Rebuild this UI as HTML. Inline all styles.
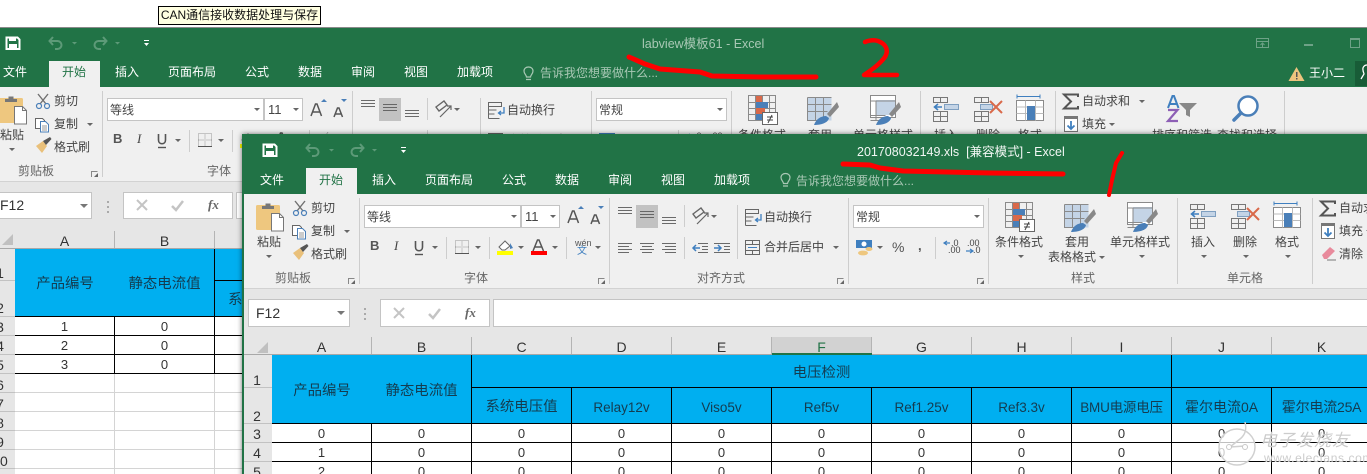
<!DOCTYPE html>
<html lang="zh"><head><meta charset="utf-8"><title>Excel</title>
<style>
html,body{margin:0;padding:0;background:#fff;width:1367px;height:474px;overflow:hidden}
body{font:12px/14px "Liberation Sans","Noto Sans CJK SC",sans-serif;color:#444}
#w{position:relative;width:1367px;height:474px;overflow:hidden}
.a{position:absolute}
b{position:absolute;font-weight:400;white-space:nowrap;line-height:14px}
svg{position:absolute;left:0;top:0;overflow:visible}
.tab b{color:#fff}
.box{position:absolute;background:#fff;border:1px solid #c4c4c4;box-sizing:border-box}
table{position:absolute;table-layout:fixed;border-collapse:separate;border-spacing:0;font-size:13px;color:#333;text-align:center}
td{padding:1px 0 0;box-sizing:border-box;border-right:1px solid #000;border-bottom:1px solid #000;overflow:hidden;white-space:nowrap;line-height:15px;background:#fff}
.h td{background:#00aff0;font-size:14.4px;color:#143c50;padding-top:4px}
td.nr{border-right:0}
.lg td{border-color:#d4d4d4}
.ch{position:absolute;background:#e6e6e6;font-size:14px;text-align:center;color:#333;border-right:1px solid #b4b4b4;box-sizing:border-box;line-height:21px;height:18px;overflow:hidden}
.n{position:absolute;width:28px;text-align:center;font-size:14px;color:#333}
.l{position:absolute;height:1px;background:#c2c2c2}
</style></head><body>
<div id="w">

<svg width="0" height="0" style="position:absolute">
<defs>
<g id="ri">
  <!-- clipboard -->
  <rect x="256" y="205" width="24" height="25" rx="1.5" fill="#eec77f"/>
  <path d="M262 209v-3h3.500v-2.500h5v2.500h3.500v3z" fill="#777"/>
  <path d="M271.500 213.500h8l4 4v13.500h-12z" fill="#fff" stroke="#777"/>
  <path d="M279.500 213.500v4h4" fill="none" stroke="#777"/>
  <!-- scissors -->
  <path d="M295 201l8 10M305 201l-8 10" stroke="#707070" stroke-width="1.400" fill="none"/>
  <circle cx="296" cy="213" r="2.500" fill="none" stroke="#4a7fb8" stroke-width="1.200"/>
  <circle cx="304" cy="213" r="2.500" fill="none" stroke="#4a7fb8" stroke-width="1.200"/>
  <!-- copy -->
  <path d="M292.500 225.500h7l2 2v8h-9z" fill="#fff" stroke="#666"/>
  <path d="M297.500 228.500h5l3 3v7.500h-8z" fill="#fff" stroke="#4a7fb8"/>
  <path d="M299 233h5M299 235h5M299 237h5" stroke="#777" stroke-width=".8"/>
  <!-- brush -->
  <path d="M293 253l7-5 4 5-5 7z" fill="#e9c07a"/>
  <path d="M300 248l7-4 1.500 2-5.500 6z" fill="#555"/>
  <!-- font size -->
  <path d="M568 223l4.500-12h1.500l4.500 12M570 219h7" stroke="#555" stroke-width="1.500" fill="none"/>
  <path d="M578 209l3-3 3 3z" fill="#4a7fb8"/>
  <path d="M591 224l3.500-9h1.500l3.500 9M592.500 221h6" stroke="#555" stroke-width="1.500" fill="none"/>
  <path d="M598 206h6l-3 3z" fill="#4a7fb8"/>
  <!-- border -->
  <path d="M455.500 240.500h13v13h-13zM462 240.500v13M455.500 247h13" fill="none" stroke="#999" stroke-dasharray="1 1"/>
  <path d="M455 253.500h14" stroke="#555"/>
  <!-- fill colour -->
  <path d="M499 247l6-6 5 5-5 4h-3z" fill="#fff" stroke="#666"/>
  <path d="M510 243l3 5-3 1z" fill="#4a7fb8"/>
  <rect x="497" y="251" width="16" height="4" fill="#ff0"/>
  <path d="M533 251l4.500-11h1.500l4.500 11M535 247h7" stroke="#555" stroke-width="1.500" fill="none"/>
  <rect x="531" y="251" width="16" height="4" fill="#f00"/>
  <!-- align -->
  <g stroke="#6a6a6a" fill="none">
  <path d="M618 207.500h14M618 210.500h14M618 213.500h14"/>
  <path d="M662 217.500h14M662 220.500h14M662 223.500h14"/>
  <path d="M618 243.500h14M618 246.500h11M618 249.500h14M618 252.500h11"/>
  <path d="M640 243.500h14M642 246.500h10M640 249.500h14M642 252.500h10"/>
  <path d="M662 243.500h14M665 246.500h11M662 249.500h14M665 252.500h11"/>
  <path d="M698 243.500h10M702 246.500h6M702 249.500h6M698 252.500h10"/>
  <path d="M714 243.500h16M724 246.500h6M724 249.500h6M714 252.500h16"/>
  </g>
  <rect x="636" y="205" width="22" height="23" fill="#c2c2c2"/>
  <path d="M640 211.500h14M640 214.500h14M640 217.500h14" stroke="#666"/>
  <path d="M700 248h-7m3-3l-3 3 3 3" stroke="#3f7fbf" stroke-width="1.500" fill="none"/>
  <path d="M714 248h7m-3-3l3 3-3 3" stroke="#3f7fbf" stroke-width="1.500" fill="none"/>
  <!-- orientation -->
  <path d="M693 214l8-6 3 4-8 6z" fill="none" stroke="#666" stroke-width="1.400"/>
  <path d="M697 224l11-11m-4 0h4v4" stroke="#666" stroke-width="1.200" fill="none"/>
  <!-- wrap -->
  <path d="M745.500 209.500h13v4h-13zM745.500 217h8M745.500 221h6M745.500 225.500h11M745.500 209.500v16" stroke="#666" fill="none"/>
  <path d="M761 214v6h-5m2-2l-2.500 2 2.500 2" stroke="#3f7fbf" stroke-width="1.300" fill="none"/>
  <!-- merge -->
  <path d="M745.500 240.500h14v14h-14zM745.500 244.500h14M745.500 250.500h14M752.500 240.500v4M752.500 250.500v4" stroke="#666" fill="none"/>
  <path d="M748 247.500h9" stroke="#3f7fbf"/>
  <!-- currency -->
  <rect x="856" y="240" width="16" height="8" fill="#3f7fbf"/>
  <circle cx="864" cy="244" r="2.500" fill="#fff"/>
  <ellipse cx="863" cy="253" rx="5" ry="2.400" fill="#eec77f"/>
  <ellipse cx="869" cy="249" rx="3.500" ry="2" fill="#eec77f"/>
  <!-- decimals -->
  <path d="M944 243h6m-3-2l-3 2 3 2" stroke="#3f7fbf" fill="none" stroke-width="1.200"/>
  <path d="M966 251h6m-2-2l3 2-3 2" stroke="#3f7fbf" fill="none" stroke-width="1.200"/>
  <!-- conditional -->
  <g fill="none" stroke="#8a8a8a"><path d="M1005.500 202.500h27v25h-27zM1005.500 209.500h27M1005.500 215.500h27M1005.500 221.500h27M1012.500 202.500v25M1019.500 202.500v25M1026.500 202.500v25"/></g>
  <rect x="1013" y="203" width="6" height="6" fill="#d9694a"/>
  <rect x="1013" y="209" width="12" height="6" fill="#4a7fb8"/>
  <rect x="1013" y="215" width="9" height="6" fill="#d9694a"/>
  <rect x="1013" y="221" width="6" height="6" fill="#4a7fb8"/>
  <rect x="1019.500" y="219.500" width="15" height="12" fill="#fff" stroke="#666"/>
  <path d="M1024 224h6M1024 227h6M1029 222l-4 8" stroke="#444"/>
  <!-- table format -->
  <rect x="1064.500" y="204.500" width="24" height="23" fill="#c4d4e6"/>
  <g fill="none" stroke="#8a8a8a"><path d="M1064.500 204.500h24M1064.500 204.500v23h14M1064.500 211.500h24M1064.500 218.500h20M1072.500 204.500v23M1080.500 204.500v20"/></g>
  <path d="M1094 209l-10 12 3 3 9-10z" fill="#888"/>
  <path d="M1071 232c2-6 7-9 12-9l3 2c-1 5-8 7-15 7z" fill="#4a7fb8"/>
  <!-- cell style -->
  <path d="M1127.500 202.500h25v22h-25z" fill="#fff" stroke="#8a8a8a"/>
  <rect x="1133" y="207" width="19" height="15" fill="#c4d4e6"/>
  <path d="M1127.500 208h25M1127.500 222.500h15M1127.500 227.500h13M1133 208v20" stroke="#8a8a8a" fill="none"/>
  <path d="M1156 209l-10 12 3 3 9-10z" fill="#888"/>
  <path d="M1133 232c2-6 7-9 12-9l3 2c-1 5-8 7-15 7z" fill="#4a7fb8"/>
  <!-- insert -->
  <g fill="none" stroke="#777"><path d="M1190.500 204.500h14v5h-14zM1197.500 204.500v5M1190.500 218.500h14v10h-14zM1190.500 223.500h14M1197.500 218.500v10"/></g>
  <rect x="1201.500" y="211.500" width="14" height="5" fill="#c4d4e6" stroke="#7f9fc0"/>
  <path d="M1199 214h-7m3-3l-3.500 3 3.500 3" stroke="#3f7fbf" stroke-width="1.600" fill="none"/>
  <!-- delete -->
  <g fill="none" stroke="#777"><path d="M1231.500 204.500h14v5h-14zM1238.500 204.500v5M1231.500 218.500h14v10h-14zM1231.500 223.500h14M1238.500 218.500v10"/></g>
  <rect x="1237.500" y="211.500" width="12" height="5" fill="#c4d4e6" stroke="#7f9fc0"/>
  <path d="M1247 208l12 12M1259 208l-12 12" stroke="#d9694a" stroke-width="2"/>
  <!-- format -->
  <path d="M1274 203.500h23M1274 201.500v4M1297 201.500v4" stroke="#3f7fbf" fill="none"/>
  <path d="M1273.500 207.500h27v20h-27z" fill="#fff" stroke="#8a8a8a"/>
  <path d="M1282.500 207.500v20M1292.500 207.500v20M1273.500 214h27M1273.500 220.500h27" stroke="#bbb" fill="none"/>
  <rect x="1284" y="213" width="8" height="14" fill="#4a7fb8"/>
  <!-- sum fill clear -->
  <path d="M1335 204v-2.500h-14l7 7-7 7h14V213" fill="none" stroke="#555" stroke-width="2"/>
  <rect x="1321.500" y="223.500" width="13" height="15" fill="#fff" stroke="#777"/>
  <rect x="1321" y="223" width="14" height="3" fill="#777"/>
  <path d="M1328 228v8m-3.500-3.500l3.500 3.500 3.500-3.500" stroke="#3f7fbf" stroke-width="1.800" fill="none"/>
  <path d="M1322 255l8-8 5 4-8 8h-3z" fill="#e88a9c"/>
  <path d="M1327 260h9" stroke="#777"/>
  <!-- sort / find -->
  <path d="M1436 210h18l-7 7v7l-4-2v-5z" fill="#888"/>
  <path d="M1425 215l4.500-12h1.500l4.500 12M1427 211h7" stroke="#3f7fbf" stroke-width="2" fill="none"/>
  <path d="M1425 217h9.500l-9.500 11h10" stroke="#8d5fb5" stroke-width="2.200" fill="none"/>
  <circle cx="1505" cy="213" r="9.500" fill="#fff" stroke="#4a7fb8" stroke-width="2.500"/>
  <path d="M1498 220l-7 7" stroke="#4a7fb8" stroke-width="3.500" stroke-linecap="round"/>
  <!-- underline -->
  <path d="M415.500 241v6c0 5 7 5 7 0v-6" fill="none" stroke="#555" stroke-width="1.600"/>
  <path d="M415 254.500h8" stroke="#555" stroke-width="1.400"/>
  <!-- carets -->
  <g fill="#666">
  <path d="M266 255h6l-3 3zM344 230h6l-3 3zM432 246h6l-3 3zM475 246h6l-3 3zM518 246h6l-3 3zM552 246h6l-3 3zM595 246h6l-3 3zM711 215h6l-3 3zM877 246h6l-3 3zM833 246h6l-3 3zM1018 255h6l-3 3zM1099 256h6l-3 3zM1139 255h6l-3 3zM1201 255h6l-3 3zM1243 255h6l-3 3zM1285 255h6l-3 3zM1396 207h6l-3 3zM1366 230h6l-3 3z"/>
  </g>
  <!-- launchers -->
  <g fill="none" stroke="#888"><path d="M348.500 284v-5.500h6M598.500 284v-5.500h6M837.500 284v-5.500h6M977.500 284v-5.500h6"/></g>
  <path d="M351 284h4v-4zM601 284h4v-4zM840 284h4v-4zM980 284h4v-4z" fill="#666"/>
  <!-- separators -->
  <g stroke="#cdcdcd"><path d="M359.500 198v86M609.500 198v86M848.500 198v86M988.500 198v86M1177.500 198v86M1312.500 198v86M1541.500 198v86M446.500 237v22M489.500 237v22M566.500 237v22M684.500 205v22M684.500 237v22M737.500 205v54M935.500 237v22"/></g>
</g>
</defs></svg>

<!-- top tooltip -->
<div class="a" style="left:158px;top:6px;width:163px;height:19px;border:1px solid #000;background:#ffffe1;box-sizing:border-box;font-size:12px;line-height:17px;color:#111;text-align:center;white-space:nowrap">CAN通信接收数据处理与保存</div>

<!-- BACK WINDOW -->
<div class="a" style="left:0;top:27px;width:1367px;height:1px;background:#8a8a8a"></div>
<div class="a" style="left:0;top:28px;width:1367px;height:59px;background:#217346"></div>
<div class="a" style="left:0;top:87px;width:1367px;height:94px;background:#f0f0f0"></div>
<div class="a" style="left:0;top:181px;width:1367px;height:293px;background:#e6e6e6;border-top:1px solid #d2d2d2;box-sizing:border-box"></div>

<svg width="1367" height="474">
  <path d="M6.500 37.500h11l2 2v9.500h-13z" fill="none" stroke="#fff" stroke-width="2"/>
  <rect x="9" y="37" width="7" height="4" fill="#fff"/><rect x="9" y="44" width="8" height="5" fill="#fff"/>
  <path d="M53 37l-3.500 4 3.500 4M50 41h7.500a4 4 0 0 1 0 8H55" fill="none" stroke="#5d9a78" stroke-width="2"/>
  <path d="M103 37l3.500 4-3.500 4M106 41h-7.500a4 4 0 0 0 0 8H101" fill="none" stroke="#5d9a78" stroke-width="2"/>
  <path d="M72 42h5l-2.500 2.500zM115 42h5l-2.500 2.500z" fill="#5d9a78"/>
  <path d="M144 40h5v1h-5zM144 43h5l-2.500 3z" fill="#fff"/>
  <path d="M526 78.500h5M526.500 76c0-2-2.500-3-2.500-6 0-2.500 2-4 4.500-4s4.500 1.500 4.500 4c0 3-2.500 4-2.500 6z" fill="none" stroke="#a9c8b5" stroke-width="1.200" transform="translate(0,1)"/>
  <path d="M1256.500 38.500h12v9h-12zM1256.500 41.500h12M1262.500 47v-3m-2 1l2-2 2 2" fill="none" stroke="#6ea287"/>
  <rect x="1304" y="44" width="9" height="2" fill="#6ea287"/>
  <path d="M1350.500 38.500h9v9h-9z" fill="none" stroke="#6ea287"/><rect x="1350" y="38" width="10" height="2" fill="#6ea287"/>
  <path d="M1296.500 67l8 14h-16z" fill="#ecc47e"/>
  <rect x="1296" y="72" width="1.500" height="5" fill="#555"/><rect x="1296" y="78" width="1.500" height="1.500" fill="#555"/>
  <rect x="1355" y="61" width="12" height="25" fill="#185c37"/>
  <path d="M1367 65a4 4 0 0 0-4 5c0 2 1 3 1 4l-3 5" fill="none" stroke="#fff" stroke-width="1.300"/>
  <path d="M629 57L645 64 660 69 700 72 712 76 760 77 816 77" fill="none" stroke="#f00" stroke-width="5" stroke-linecap="round" stroke-linejoin="round"/>
  <path d="M865 42C870 40 875 40 878 41 886 44 889 50 885 57 879 65 870 71 864 75L897 75" fill="none" stroke="#f00" stroke-width="4.500" stroke-linecap="round" stroke-linejoin="round"/>
</svg>
<b style="left:642px;top:37px;color:#a9c8b5;font-size:12.5px">labview模板61 - Excel</b>
<div class="tab">
<b style="left:3px;top:65px">文件</b>
<div class="a" style="left:49px;top:61px;width:51px;height:26px;background:#f0f0f0"></div>
<b style="left:62px;top:65px;color:#217346">开始</b>
<b style="left:115px;top:65px">插入</b><b style="left:168px;top:65px">页面布局</b><b style="left:245px;top:65px">公式</b><b style="left:298px;top:65px">数据</b><b style="left:351px;top:65px">审阅</b><b style="left:404px;top:65px">视图</b><b style="left:457px;top:65px">加载项</b>
<b style="left:540px;top:66px;color:#a9c8b5">告诉我您想要做什么...</b>
<b style="left:1309px;top:66px">王小二</b>
</div>

<!-- back ribbon (front coords shifted) -->
<div class="a" style="left:-257px;top:-107px;width:1800px;height:300px">
<svg width="1800" height="300"><use href="#ri"/></svg>
<div class="box" style="left:364px;top:205px;width:157px;height:23px"></div><div class="box" style="left:521px;top:205px;width:39px;height:23px"></div><div class="box" style="left:853px;top:205px;width:131px;height:23px"></div>
<svg width="1800" height="300"><path d="M511 215h6l-3 3zM550 215h6l-3 3zM974 215h6l-3 3z" fill="#666"/></svg>
<b style="left:257px;top:235px">粘贴</b><b style="left:311px;top:201px">剪切</b><b style="left:311px;top:224px">复制</b><b style="left:311px;top:247px">格式刷</b><b style="left:275px;top:271px;color:#666">剪贴板</b>
<b style="left:367px;top:210px">等线</b><b style="left:525px;top:210px;font-size:13px">11</b>
<b style="left:370px;top:239px;font-weight:700;color:#555;font-size:13px">B</b><b style="left:394px;top:239px;font-style:italic;font-size:13px;font-family:'Liberation Serif',serif">I</b>
<b style="left:464px;top:271px;color:#666">字体</b>
<b style="left:764px;top:210px">自动换行</b><b style="left:764px;top:240px">合并后居中</b><b style="left:697px;top:271px;color:#666">对齐方式</b>
<b style="left:856px;top:210px">常规</b><b style="left:892px;top:240px;font-size:14px;color:#555">%</b><b style="left:918px;top:239px;font-weight:700;color:#555;font-size:13px">,</b><b style="left:951px;top:236px;font-size:9px">.0</b><b style="left:948px;top:243px;font-size:9px">.00</b><b style="left:967px;top:236px;font-size:9px">.00</b><b style="left:973px;top:243px;font-size:9px">.0</b>
<b style="left:995px;top:235px">条件格式</b><b style="left:1065px;top:235px">套用</b><b style="left:1048px;top:250px">表格格式</b><b style="left:1110px;top:235px">单元格样式</b><b style="left:1071px;top:271px;color:#666">样式</b>
<b style="left:1191px;top:235px">插入</b><b style="left:1233px;top:235px">删除</b><b style="left:1275px;top:235px">格式</b><b style="left:1227px;top:271px;color:#666">单元格</b>
<b style="left:1339px;top:201px">自动求和</b><b style="left:1339px;top:224px">填充</b><b style="left:1339px;top:247px">清除</b>
<b style="left:1409px;top:235px">排序和筛选</b><b style="left:1474px;top:235px">查找和选择</b>
<b style="left:575px;top:236px;font-size:9px;color:#555">wén</b><b style="left:577px;top:245px;font-size:10px;color:#3f7fbf">文</b>
</div>

<!-- back sheet -->
<div class="box" style="left:-1px;top:192px;width:93px;height:27px;font-size:14px;line-height:25px;color:#333">F12</div>
<svg width="300" height="250"><path d="M80 204h8l-4 4z" fill="#777"/><path d="M108 201v2M108 206v2M108 211v2" stroke="#aaa" stroke-width="2"/></svg>
<div class="box" style="left:123px;top:192px;width:110px;height:27px"></div>
<div class="box" style="left:236px;top:192px;width:20px;height:27px"></div>
<svg width="300" height="250"><path d="M137 200l10 10M147 200l-10 10" stroke="#c4c4c4" stroke-width="2"/><path d="M172 206l4 4 7-9" stroke="#c4c4c4" stroke-width="2.500" fill="none"/><path d="M13 234v11H2z" fill="#c0c0c0"/></svg>
<b style="left:208px;top:198px;font:italic 700 13px/14px 'Liberation Serif',serif;color:#666">fx</b>
<div class="ch" style="left:15px;top:231px;width:100px">A</div><div class="ch" style="left:115px;top:231px;width:100px">B</div><div class="ch" style="left:215px;top:231px;width:60px;border:0"></div>
<div class="a" style="left:0;top:248px;width:242px;height:1px;background:#a8a8a8"></div>
<table style="left:15px;top:249px;width:300px">
<col style="width:100px"><col style="width:100px"><col style="width:100px">
<tr class="h" style="height:32px"><td rowspan="2" class="nr" style="height:68px">产品编号</td><td rowspan="2">静态电流值</td><td></td></tr>
<tr class="h" style="height:36px"><td style="text-align:left;padding-left:13px">系统电压值</td></tr>
<tr style="height:19px"><td>1</td><td>0</td><td></td></tr>
<tr style="height:19px"><td>2</td><td>0</td><td></td></tr>
<tr style="height:19px"><td>3</td><td>0</td><td></td></tr>
<tr class="lg" style="height:19px"><td></td><td></td><td></td></tr>
<tr class="lg" style="height:19px"><td></td><td></td><td></td></tr>
<tr class="lg" style="height:19px"><td></td><td></td><td></td></tr>
<tr class="lg" style="height:19px"><td></td><td></td><td></td></tr>
<tr class="lg" style="height:19px"><td></td><td></td><td></td></tr>
<tr class="lg" style="height:19px"><td></td><td></td><td></td></tr>
</table>
<div class="n" style="left:-14px;top:266px">1</div><div class="n" style="left:-14px;top:301px">2</div><div class="n" style="left:-14px;top:320px">3</div><div class="n" style="left:-14px;top:339px">4</div><div class="n" style="left:-14px;top:358px">5</div><div class="n" style="left:-14px;top:378px">6</div><div class="n" style="left:-14px;top:397px">7</div><div class="n" style="left:-14px;top:416px">8</div><div class="n" style="left:-14px;top:435px">9</div><div class="n" style="left:-14px;top:454px">10</div>
<div class="l" style="left:0;top:280px;width:15px"></div><div class="l" style="left:0;top:316px;width:15px"></div><div class="l" style="left:0;top:335px;width:15px"></div><div class="l" style="left:0;top:354px;width:15px"></div><div class="l" style="left:0;top:373px;width:15px"></div><div class="l" style="left:0;top:392px;width:15px"></div><div class="l" style="left:0;top:411px;width:15px"></div><div class="l" style="left:0;top:430px;width:15px"></div><div class="l" style="left:0;top:449px;width:15px"></div><div class="l" style="left:0;top:468px;width:15px"></div>

<!-- FRONT WINDOW -->
<div class="a" style="left:242px;top:134px;width:1200px;height:400px;background:#e6e6e6;box-shadow:0 0 5px rgba(0,0,0,.55)"></div>
<div class="a" style="left:242px;top:134px;width:2px;height:340px;background:#217346"></div>
<div class="a" style="left:242px;top:134px;width:1125px;height:60px;background:#217346"></div>
<div class="a" style="left:244px;top:194px;width:1123px;height:94px;background:#f0f0f0;border-bottom:1px solid #d2d2d2"></div>
<svg width="1367" height="474">
  <path d="M263.500 144.500h11l2 2v9.500h-13z" fill="none" stroke="#fff" stroke-width="2"/>
  <rect x="266" y="144" width="7" height="4" fill="#fff"/><rect x="266" y="151" width="8" height="5" fill="#fff"/>
  <path d="M310 144l-3.500 4 3.500 4M307 148h7.500a4 4 0 0 1 0 8H312" fill="none" stroke="#5d9a78" stroke-width="2"/>
  <path d="M360 144l3.500 4-3.500 4M363 148h-7.500a4 4 0 0 0 0 8H358" fill="none" stroke="#5d9a78" stroke-width="2"/>
  <path d="M329 149h5l-2.500 2.500zM372 149h5l-2.500 2.500z" fill="#5d9a78"/>
  <path d="M401 147h5v1h-5zM401 150h5l-2.500 3z" fill="#fff"/>
  <path d="M783 186h5M783.500 183.500c0-2-2.500-3-2.500-6 0-2.500 2-4 4.500-4s4.500 1.500 4.500 4c0 3-2.500 4-2.500 6z" fill="none" stroke="#a9c8b5" stroke-width="1.200"/>
</svg>
<b style="left:857px;top:145px;color:#f2f7f4;font-size:12.5px;white-space:pre">201708032149.xls  [兼容模式] - Excel</b>
<div class="tab">
<b style="left:260px;top:173px">文件</b>
<div class="a" style="left:306px;top:168px;width:51px;height:26px;background:#f0f0f0"></div>
<b style="left:319px;top:173px;color:#217346">开始</b>
<b style="left:372px;top:173px">插入</b><b style="left:425px;top:173px">页面布局</b><b style="left:502px;top:173px">公式</b><b style="left:555px;top:173px">数据</b><b style="left:608px;top:173px">审阅</b><b style="left:661px;top:173px">视图</b><b style="left:714px;top:173px">加载项</b>
<b style="left:796px;top:174px;color:#a9c8b5">告诉我您想要做什么...</b>
</div>

<!-- front ribbon -->
<div class="a" style="left:0;top:0;width:1367px;height:300px;overflow:hidden">
<svg width="1800" height="300"><use href="#ri"/></svg>
<div class="box" style="left:364px;top:205px;width:157px;height:23px"></div><div class="box" style="left:521px;top:205px;width:39px;height:23px"></div><div class="box" style="left:853px;top:205px;width:131px;height:23px"></div>
<svg width="1800" height="300"><path d="M511 215h6l-3 3zM550 215h6l-3 3zM974 215h6l-3 3z" fill="#666"/></svg>
<b style="left:257px;top:235px">粘贴</b><b style="left:311px;top:201px">剪切</b><b style="left:311px;top:224px">复制</b><b style="left:311px;top:247px">格式刷</b><b style="left:275px;top:271px;color:#666">剪贴板</b>
<b style="left:367px;top:210px">等线</b><b style="left:525px;top:210px;font-size:13px">11</b>
<b style="left:370px;top:239px;font-weight:700;color:#555;font-size:13px">B</b><b style="left:394px;top:239px;font-style:italic;font-size:13px;font-family:'Liberation Serif',serif">I</b>
<b style="left:464px;top:271px;color:#666">字体</b>
<b style="left:764px;top:210px">自动换行</b><b style="left:764px;top:240px">合并后居中</b><b style="left:697px;top:271px;color:#666">对齐方式</b>
<b style="left:856px;top:210px">常规</b><b style="left:892px;top:240px;font-size:14px;color:#555">%</b><b style="left:918px;top:239px;font-weight:700;color:#555;font-size:13px">,</b><b style="left:951px;top:236px;font-size:9px">.0</b><b style="left:948px;top:243px;font-size:9px">.00</b><b style="left:967px;top:236px;font-size:9px">.00</b><b style="left:973px;top:243px;font-size:9px">.0</b>
<b style="left:995px;top:235px">条件格式</b><b style="left:1065px;top:235px">套用</b><b style="left:1048px;top:250px">表格格式</b><b style="left:1110px;top:235px">单元格样式</b><b style="left:1071px;top:271px;color:#666">样式</b>
<b style="left:1191px;top:235px">插入</b><b style="left:1233px;top:235px">删除</b><b style="left:1275px;top:235px">格式</b><b style="left:1227px;top:271px;color:#666">单元格</b>
<b style="left:1339px;top:201px">自动求和</b><b style="left:1339px;top:224px">填充</b><b style="left:1339px;top:247px">清除</b>
<b style="left:575px;top:236px;font-size:9px;color:#555">wén</b><b style="left:577px;top:245px;font-size:10px;color:#3f7fbf">文</b>
</div>

<!-- front sheet -->
<div class="box" style="left:248px;top:299px;width:102px;height:28px;font-size:14px;line-height:26px;color:#333;padding-left:7px">F12</div>
<div class="box" style="left:380px;top:299px;width:110px;height:28px"></div>
<div class="box" style="left:493px;top:299px;width:880px;height:28px"></div>
<svg width="1367" height="474"><path d="M337 311h8l-4 4z" fill="#777"/><path d="M365 308v2M365 313v2M365 318v2" stroke="#aaa" stroke-width="2"/><path d="M394 308l10 10M404 308l-10 10" stroke="#c4c4c4" stroke-width="2"/><path d="M429 314l4 4 7-9" stroke="#c4c4c4" stroke-width="2.500" fill="none"/><path d="M268 342v11h-11z" fill="#c0c0c0"/></svg>
<b style="left:465px;top:306px;font:italic 700 13px/14px 'Liberation Serif',serif;color:#666">fx</b>
<div class="ch" style="left:272px;top:337px;width:100px">A</div><div class="ch" style="left:372px;top:337px;width:100px">B</div><div class="ch" style="left:472px;top:337px;width:100px">C</div><div class="ch" style="left:572px;top:337px;width:100px">D</div><div class="ch" style="left:672px;top:337px;width:100px">E</div><div class="ch" style="left:772px;top:337px;width:100px;background:#d2d2d2;color:#217346">F</div><div class="ch" style="left:872px;top:337px;width:100px">G</div><div class="ch" style="left:972px;top:337px;width:100px">H</div><div class="ch" style="left:1072px;top:337px;width:100px">I</div><div class="ch" style="left:1172px;top:337px;width:100px">J</div><div class="ch" style="left:1272px;top:337px;width:100px">K</div>
<div class="a" style="left:244px;top:354px;width:1123px;height:1px;background:#a8a8a8"></div>
<div class="a" style="left:772px;top:353px;width:100px;height:2px;background:#217346"></div>

<table style="left:272px;top:355px;width:1100px">
<col style="width:100px"><col style="width:100px"><col style="width:100px"><col style="width:100px"><col style="width:100px"><col style="width:100px"><col style="width:100px"><col style="width:100px"><col style="width:100px"><col style="width:100px"><col style="width:100px">
<tr class="h" style="height:33px"><td rowspan="2" class="nr" style="height:69px">产品编号</td><td rowspan="2">静态电流值</td><td colspan="7">电压检测</td><td colspan="2"></td></tr>
<tr class="h" style="height:36px"><td>系统电压值</td><td style="font-size:13.5px">Relay12v</td><td style="font-size:13.5px">Viso5v</td><td style="font-size:13.5px">Ref5v</td><td style="font-size:13.5px">Ref1.25v</td><td style="font-size:13.5px">Ref3.3v</td><td style="font-size:13.5px;letter-spacing:-.2px">BMU电源电压</td><td style="font-size:14px">霍尔电流0A</td><td style="font-size:14px;letter-spacing:-.2px">霍尔电流25A</td></tr>
<tr style="height:19px"><td>0</td><td>0</td><td>0</td><td>0</td><td>0</td><td>0</td><td>0</td><td>0</td><td>0</td><td>0</td><td>0</td></tr>
<tr style="height:19px"><td>1</td><td>0</td><td>0</td><td>0</td><td>0</td><td>0</td><td>0</td><td>0</td><td>0</td><td>0</td><td>0</td></tr>
<tr style="height:19px"><td>2</td><td>0</td><td>0</td><td>0</td><td>0</td><td>0</td><td>0</td><td>0</td><td>0</td><td>0</td><td>0</td></tr>
</table>
<div class="n" style="left:243px;top:373px">1</div><div class="n" style="left:243px;top:409px">2</div><div class="n" style="left:243px;top:427px">3</div><div class="n" style="left:243px;top:446px">4</div><div class="n" style="left:243px;top:465px">5</div>
<div class="l" style="left:244px;top:387px;width:28px"></div><div class="l" style="left:244px;top:423px;width:28px"></div><div class="l" style="left:244px;top:442px;width:28px"></div><div class="l" style="left:244px;top:461px;width:28px"></div>

<!-- red strokes and watermark -->
<svg width="1367" height="474">
  <path d="M843 164L870 165 880 168 903 171 990 173 1063 174" fill="none" stroke="#f00" stroke-width="5" stroke-linecap="round" stroke-linejoin="round"/>
  <path d="M1122 153L1116 163 1112 180 1109 195" fill="none" stroke="#f00" stroke-width="4" stroke-linecap="round" stroke-linejoin="round"/>
  <circle cx="1237" cy="447" r="18" fill="#fff" fill-opacity=".75" stroke="#d0d0d0" stroke-width="1.500"/>
  <path d="M1245 422c2 8 0 13-5 17l-10 8M1230 447l15-1" fill="none" stroke="#d0d0d0" stroke-width="1.500"/>
  <circle cx="1229" cy="447" r="2.500" fill="#fff" stroke="#c8c8c8"/><circle cx="1245" cy="447" r="2.500" fill="#fff" stroke="#c8c8c8"/>
</svg>
<b style="left:1260px;top:431px;font-size:17px;line-height:20px;font-style:italic;color:#ccc;letter-spacing:1px;text-shadow:0 0 2px #fff">电子发烧友</b>
<b style="left:1264px;top:451px;font-size:12px;color:#ccc;letter-spacing:.6px;text-shadow:0 0 2px #fff">www.elecfans.com</b>
</div>
</body></html>
